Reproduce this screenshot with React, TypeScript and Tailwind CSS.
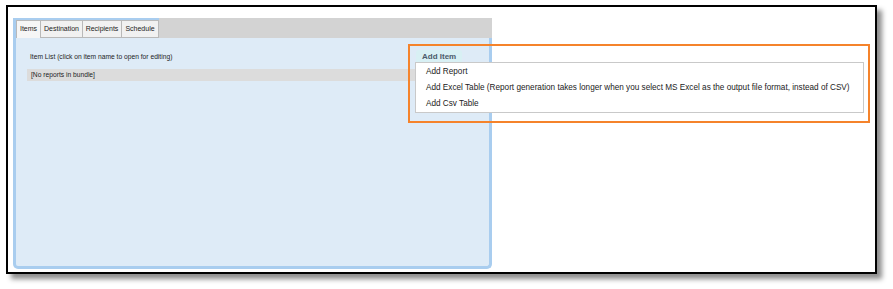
export default function App() {
  const tabs = [
    { label: "Items", w: "w-[25px]" },
    { label: "Destination", w: "w-[42px]" },
    { label: "Recipients", w: "w-[39px]" },
    { label: "Schedule", w: "w-[37px]" },
  ];

  return (
    <div className="relative w-[893px] h-[289px] bg-white pl-[6px] pt-[5px] font-['Liberation_Sans',Arial,sans-serif] text-[#222]">
      <div className="w-[871px] h-[269px] border-2 border-black bg-white shadow-[5px_5px_5px_rgba(0,0,0,0.45)] pl-[5px] pt-[11px]">
        {/* tab panel */}
        <div className="flex flex-col w-[479px] h-[251px]">
          <div className="flex h-[20px]">
            <div className="flex bg-[#a9cdef] pl-[3px] pt-[2px]">
              {tabs.map((t, i) => (
                <div
                  key={t.label}
                  className={`${t.w} h-[18px] flex items-center justify-center border border-[#b9b9b9] ${i === 0 ? "bg-[#f6f6f6] border-b-0" : "bg-[#f1f1f1] border-l-0"} text-[7px] text-[#222]`}
                >
                  {t.label}
                </div>
              ))}
            </div>
            <div className="flex-1 bg-[#d3d3d3]" />
          </div>
          <div className="flex-1 bg-[#deebf7] border-[3px] border-t-0 border-[#a9cdef] rounded-b-[5px] px-[11px] pt-[13px]">
            <div className="text-[6.7px] h-[12px] leading-[12px] pl-[3px]">Item List (click on item name to open for editing)</div>
            <div className="mt-[6px] h-[12px] bg-[#dcdcdc] text-[6.7px] leading-[12px] pl-[4px]">[No reports in bundle]</div>
          </div>
        </div>
      </div>

      {/* add item menu */}
      <div className="absolute left-[416px] top-[50px] h-[12px] px-[6px] bg-[#d8f0f4] rounded-t-[3px] text-[8px] font-bold leading-[13px] text-[#4d5c6b]">
        Add Item
      </div>
      <div className="absolute left-[415px] top-[62px] w-[449px] h-[51px] bg-white border border-[#c9c9c9] pt-[1px]">
        {[
          "Add Report",
          "Add Excel Table (Report generation takes longer when you select MS Excel as the output file format, instead of CSV)",
          "Add Csv Table",
        ].map((s) => (
          <div key={s} className="h-[16px] leading-[16px] pl-[10px] text-[8.2px] text-[#222] whitespace-nowrap">
            {s}
          </div>
        ))}
      </div>

      {/* highlight */}
      <div className="absolute left-[408px] top-[44px] w-[462px] h-[79px] border-2 border-[#f5832b]" />
    </div>
  );
}
